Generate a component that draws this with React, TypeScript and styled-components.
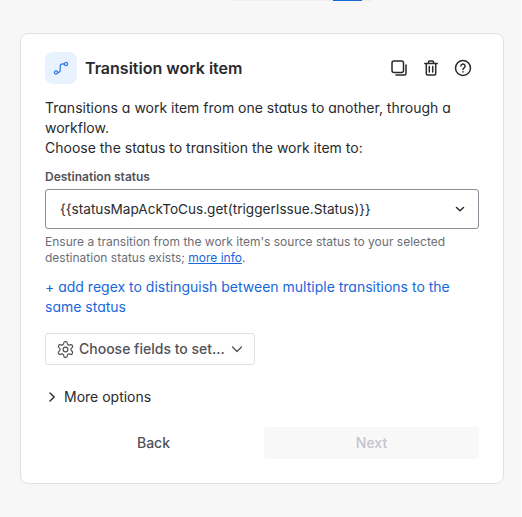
import React from "react";
import styled, { createGlobalStyle } from "styled-components";

const Global = createGlobalStyle`
  html, body { margin: 0; padding: 0; background: #f7f7f7; }
  body { font-family: Inter, "Liberation Sans", sans-serif; }
  #root { width: 522px; height: 517px; overflow: hidden; }
`;

const Page = styled.div`
  width: 522px;
  height: 517px;
  box-sizing: border-box;
  padding: 0 17px 0 20px;
  background: #f7f7f7;
  border-right: 1px solid #fdfdfd;
`;

const TopTabs = styled.div`
  display: flex;
  height: 1px;
  margin: 0 0 32px 210px;
`;

const TabSliver = styled.div<{ $w: number; $c: string }>`
  width: ${(p) => p.$w}px;
  background: ${(p) => p.$c};
`;

const Card = styled.section`
  box-sizing: border-box;
  width: 484px;
  height: 451px;
  padding: 18px 24px 0 24px;
  background: #fff;
  border: 1px solid #dfe1e6;
  border-radius: 8px;
  color: #292a2e;
`;

const Header = styled.header`
  display: flex;
  align-items: center;
  height: 32px;
`;

const IconTile = styled.div`
  width: 32px;
  height: 32px;
  border-radius: 8px;
  background: #e9f2ff;
  display: flex;
  align-items: center;
  justify-content: center;
  color: #357de8;
`;

const Title = styled.h2`
  margin: 0 0 0 8px;
  flex: 1;
  font-size: 16px;
  line-height: 20px;
  font-weight: 600;
  color: #292a2e;
`;

const Actions = styled.div`
  display: flex;
  align-items: center;
  gap: 14px;
  margin-right: 7px;
`;

const ActionIcon = styled.svg`
  width: 18px;
  height: 18px;
  display: block;
  fill: none;
  stroke: #292a2e;
  stroke-width: 1.5;
  stroke-linecap: round;
  stroke-linejoin: round;
`;

const Description = styled.p`
  margin: 14px 0 0;
  font-size: 14px;
  line-height: 20px;
  color: #292a2e;
  font-feature-settings: "cv11";
`;

const FieldLabel = styled.label`
  display: block;
  margin-top: 11px;
  font-size: 12px;
  line-height: 16px;
  font-weight: 600;
  color: #505258;
`;

const SelectBox = styled.div`
  box-sizing: border-box;
  margin-top: 4px;
  height: 40px;
  display: flex;
  align-items: center;
  justify-content: space-between;
  padding: 0 12px 0 14px;
  border: 1px solid #8c8f97;
  border-radius: 3px;
  font-size: 13.6px;
  color: #292a2e;
`;

const Help = styled.p`
  margin: 5px 0 0;
  font-size: 12px;
  line-height: 16px;
  color: #6b6e76;
`;

const HelpLink = styled.a`
  color: #1868db;
  text-decoration: underline;
`;

const RegexLink = styled.div`
  margin-top: 11px;
  font-size: 14px;
  line-height: 20px;
  color: #1868db;
  font-feature-settings: "cv11";
`;

const FieldsButton = styled.button`
  box-sizing: border-box;
  margin-top: 16px;
  width: 210px;
  height: 32px;
  display: flex;
  align-items: center;
  padding: 0 11px 0 10px;
  background: #fff;
  border: 1px solid #dfe1e6;
  border-radius: 3px;
  font: 500 14px/20px Inter, "Liberation Sans", sans-serif;
  color: #505258;
  white-space: nowrap;
`;

const FieldsText = styled.span`
  margin-left: 4px;
  flex: 1;
  text-align: left;
`;

const MoreOptions = styled.div`
  margin-top: 22px;
  padding-left: 2px;
  display: flex;
  align-items: center;
  gap: 7px;
  font-size: 14px;
  line-height: 20px;
  color: #292a2e;
`;

const Footer = styled.div`
  margin-top: 20px;
  display: grid;
  grid-template-columns: 1fr 215px;
  gap: 2px;
`;

const FooterButton = styled.button<{ $disabled?: boolean }>`
  height: 32px;
  border: 0;
  border-radius: 3px;
  background: ${(p) => (p.$disabled ? "#f8f8f8" : "transparent")};
  color: ${(p) => (p.$disabled ? "#c3c5ca" : "#505258")};
  font: 500 14px/20px Inter, "Liberation Sans", sans-serif;
`;

export default function App() {
  return (
    <Page>
      <Global />
      <TopTabs>
        <TabSliver $w={103} $c="#eeeeef" />
        <TabSliver $w={29} $c="#1868db" />
        <TabSliver $w={10} $c="#eeeeef" />
      </TopTabs>
      <Card>
        <Header>
          <IconTile>
            <svg width="16" height="16" viewBox="0 0 16 16" fill="none" stroke="currentColor" strokeWidth="1.3" strokeLinecap="round">
              <circle cx="3" cy="12.5" r="1.6" />
              <circle cx="13" cy="4" r="1.6" />
              <path d="M4.600 12.500c1.700 0 2.600-.7 2.600-2.200V6.200c0-1.400.8-2.200 2.200-2.200h2" />
            </svg>
          </IconTile>
          <Title>Transition work item</Title>
          <Actions>
            <ActionIcon viewBox="0 0 18 18">
              <rect x="2" y="2" width="11.5" height="11.5" rx="2" />
              <path d="M16 6v8.500a1.500 1.500 0 0 1-1.500 1.500H6" />
            </ActionIcon>
            <ActionIcon viewBox="0 0 18 18">
              <path d="M2.800 4.500h12.400M6.500 4.500V3a1 1 0 0 1 1-1h3a1 1 0 0 1 1 1v1.500" />
              <path d="M4.300 4.500v10.200A1.300 1.300 0 0 0 5.600 16h6.800a1.300 1.300 0 0 0 1.300-1.300V4.500" />
              <path d="M7.300 7.500v5.500M10.700 7.500v5.500" />
            </ActionIcon>
            <ActionIcon viewBox="0 0 18 18">
              <circle cx="9" cy="9" r="7.500" />
              <path d="M6.900 7.100a2.100 2.100 0 1 1 3.200 1.800c-.7.4-1.100.9-1.100 1.600" />
              <path d="M9 12.800v.1" />
            </ActionIcon>
          </Actions>
        </Header>
        <Description>
          Transitions a work item from one status to another, through a workflow.
          <br />
          Choose the status to transition the work item to:
        </Description>
        <FieldLabel>Destination status</FieldLabel>
        <SelectBox>
          <span>{"{{statusMapAckToCus.get(triggerIssue.Status)}}"}</span>
          <svg width="12" height="12" viewBox="0 0 12 12" fill="none" stroke="#292a2e" strokeWidth="1.5" strokeLinecap="round" strokeLinejoin="round">
            <path d="M2.500 4.500 6 7.700l3.500-3.200" />
          </svg>
        </SelectBox>
        <Help>
          Ensure a transition from the work item's source status to your selected destination status exists; <HelpLink>more info</HelpLink>.
        </Help>
        <RegexLink>+ add regex to distinguish between multiple transitions to the same status</RegexLink>
        <FieldsButton>
          <svg width="19" height="19" viewBox="0 0 24 24" fill="none" stroke="#505258" strokeWidth="1.500" strokeLinecap="round" strokeLinejoin="round">
            <path d="M12.220 2h-.44a2 2 0 0 0-2 2v.18a2 2 0 0 1-1 1.730l-.43.25a2 2 0 0 1-2 0l-.15-.08a2 2 0 0 0-2.730.73l-.22.38a2 2 0 0 0 .73 2.730l.15.1a2 2 0 0 1 1 1.720v.51a2 2 0 0 1-1 1.740l-.15.09a2 2 0 0 0-.73 2.730l.22.38a2 2 0 0 0 2.730.73l.15-.08a2 2 0 0 1 2 0l.43.25a2 2 0 0 1 1 1.730V20a2 2 0 0 0 2 2h.44a2 2 0 0 0 2-2v-.18a2 2 0 0 1 1-1.730l.43-.25a2 2 0 0 1 2 0l.15.08a2 2 0 0 0 2.730-.73l.22-.39a2 2 0 0 0-.73-2.730l-.15-.08a2 2 0 0 1-1-1.740v-.5a2 2 0 0 1 1-1.740l.15-.09a2 2 0 0 0 .73-2.730l-.22-.38a2 2 0 0 0-2.730-.73l-.15.08a2 2 0 0 1-2 0l-.43-.25a2 2 0 0 1-1-1.730V4a2 2 0 0 0-2-2z" />
            <circle cx="12" cy="12" r="3" />
          </svg>
          <FieldsText>Choose fields to set...</FieldsText>
          <svg width="12" height="12" viewBox="0 0 12 12" fill="none" stroke="#505258" strokeWidth="1.300" strokeLinecap="round" strokeLinejoin="round">
            <path d="M1.500 4 6 8.500 10.500 4" />
          </svg>
        </FieldsButton>
        <MoreOptions>
          <svg width="10" height="12" viewBox="0 0 10 12" fill="none" stroke="#292a2e" strokeWidth="1.400" strokeLinecap="round" strokeLinejoin="round">
            <path d="M3 2l4.200 4L3 10" />
          </svg>
          More options
        </MoreOptions>
        <Footer>
          <FooterButton>Back</FooterButton>
          <FooterButton $disabled disabled>Next</FooterButton>
        </Footer>
      </Card>
    </Page>
  );
}
